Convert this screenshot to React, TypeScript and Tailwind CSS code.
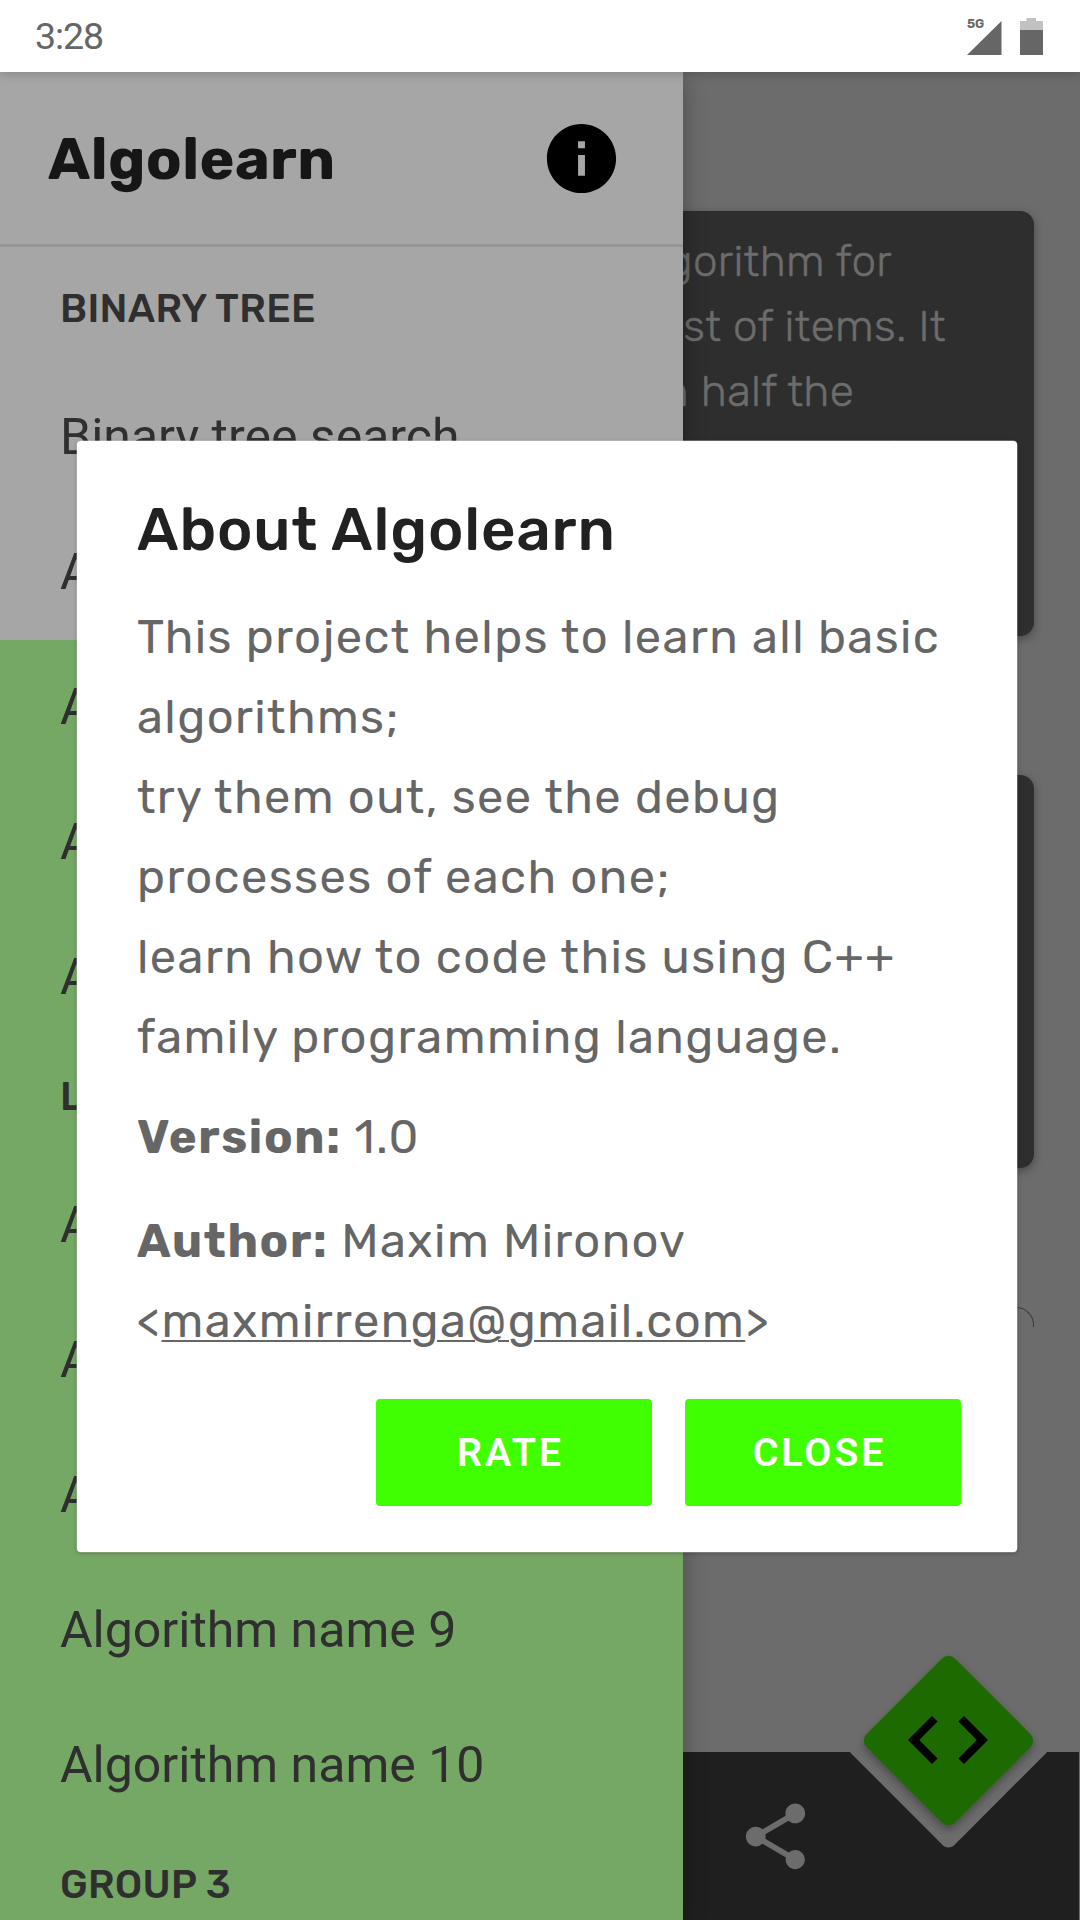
import type { ReactNode } from "react";

const firstGroup = ["Binary tree search", "Algorithm name 2"];
const secondHalf = ["Algorithm name 3", "Algorithm name 4", "Algorithm name 5"];
const listGroup = [
  "Algorithm name 6",
  "Algorithm name 7",
  "Algorithm name 8",
  "Algorithm name 9",
  "Algorithm name 10",
];

function StatusBar() {
  return (
    <header className="relative z-30 flex h-[72px] shrink-0 items-center justify-between bg-white pr-[37px] pl-[35px] text-[#666666] shadow-[0_2px_10px_rgba(0,0,0,0.2)]">
      <span className="font-['Roboto',sans-serif] text-[37.5px] leading-[42px] tracking-[-1.1px]">3:28</span>
      <div className="flex h-[37px] items-end gap-[18px]">
        <div className="relative h-[34px] w-[35px]">
          <span className="absolute top-[-5px] left-0 font-['Rubik','Roboto',sans-serif] text-[13px] leading-[16px] font-semibold tracking-[-0.3px]">
            5G
          </span>
          <svg viewBox="0 0 35 34" className="h-[34px] w-[35px]" fill="currentColor">
            <path d="M0 34 34.5 0v34z" />
          </svg>
        </div>
        <svg viewBox="0 0 23 37" className="h-[37px] w-[23px]">
          <path d="M6.5 0h9.5v3H23v9H0V3h6.5z" fill="#c1c1c1" />
          <path d="M0 12h23v25H0z" fill="#666666" />
        </svg>
      </div>
    </header>
  );
}

function GroupTitle({ children }: { children: ReactNode }) {
  return (
    <h2 className="h-[113px] pl-[60px] font-['Rubik','Roboto',sans-serif] text-[39.5px] leading-[103px] font-medium tracking-[0.3px]">
      {children}
    </h2>
  );
}

function Item({ children }: { children: ReactNode }) {
  return (
    <div className="h-[135px] pl-[60px] font-['Roboto',sans-serif] text-[50px] leading-[134px]">{children}</div>
  );
}

function Drawer() {
  return (
    <nav className="absolute inset-y-0 left-0 z-10 flex w-[683px] flex-col overflow-hidden bg-[#a6a6a6] text-[#2f2f2f]">
      <div className="flex h-[175px] shrink-0 items-center justify-between border-b-[3px] border-[#959595] pt-[2px] pr-[60px] pl-[48px]">
        <h1 className="font-['Rubik','Roboto',sans-serif] text-[59px] leading-[80px] font-bold tracking-[0.4px] text-[#161616]">
          Algolearn
        </h1>
        <svg viewBox="0 0 24 24" className="mb-[1px] size-[83px]" fill="#000">
          <path d="M12 2C6.48 2 2 6.48 2 12s4.48 10 10 10 10-4.48 10-10S17.52 2 12 2zm1 15h-2v-6h2v6zm0-8h-2V7h2v2z" />
        </svg>
      </div>
      <div className="shrink-0 pt-[10px]">
        <GroupTitle>BINARY TREE</GroupTitle>
        {firstGroup.map((name) => (
          <Item key={name}>{name}</Item>
        ))}
      </div>
      <div className="h-[1280px] shrink-0 bg-[#75a765]">
        {secondHalf.map((name) => (
          <Item key={name}>{name}</Item>
        ))}
        <GroupTitle>LIST</GroupTitle>
        {listGroup.map((name) => (
          <Item key={name}>{name}</Item>
        ))}
        <GroupTitle>GROUP 3</GroupTitle>
      </div>
    </nav>
  );
}

function Page() {
  return (
    <main className="relative flex h-full flex-col bg-[#6c6c6c]">
      <div className="flex flex-col gap-[139px] pt-[139px] pr-[46px] pl-[46px]">
        <section className="h-[425px] rounded-[14px] bg-[#2e2e2e] pt-[18px] text-right font-['Rubik','Roboto',sans-serif] text-[44px] leading-[65px] font-light tracking-[0.33px] whitespace-nowrap text-[#6c6c6c] shadow-[0_3px_10px_rgba(0,0,0,0.35)] [-webkit-text-stroke:0.5px_#6c6c6c]">
          <p className="pr-[142px]">Binary search is an efficient algorithm for</p>
          <p className="pr-[88px]">finding an item from a list of items. It</p>
          <p className="pr-[180px]">works by dividing in half the</p>
          <p className="pr-[134px]">portion of the list that could</p>
        </section>
        <section className="h-[393px] rounded-[14px] bg-[#2e2e2e] shadow-[0_3px_10px_rgba(0,0,0,0.35)]" />
        <section className="h-[20px] rounded-tr-[18px] border-t border-r border-[#3a3a3a]" />
      </div>
      <div className="relative mt-auto mr-px h-[168px] overflow-hidden bg-[#1f1f1f]">
        <div className="absolute top-[-69.5px] left-[878.8px] size-[139px] rotate-45 rounded-br-[8px] bg-[#6c6c6c]" />
        <svg viewBox="0 0 24 24" className="absolute top-[44.5px] left-[735.7px] size-[79px]" fill="#6c6c6c">
          <path d="M18 16.08c-.76 0-1.44.3-1.96.77L8.91 12.7c.05-.23.09-.46.09-.7s-.04-.47-.09-.7l7.05-4.11c.54.5 1.25.81 2.04.81 1.66 0 3-1.34 3-3s-1.34-3-3-3-3 1.34-3 3c0 .24.04.47.09.7L8.04 9.81C7.5 9.31 6.79 9 6 9c-1.66 0-3 1.34-3 3s1.34 3 3 3c.79 0 1.5-.31 2.04-.81l7.12 4.16c-.05.21-.08.43-.08.65 0 1.61 1.31 2.92 2.92 2.92s2.92-1.31 2.92-2.92-1.31-2.92-2.92-2.92z" />
        </svg>
      </div>
      <div className="absolute right-[47px] bottom-[95px] flex size-[170px] items-center justify-center">
        <div className="absolute size-[125px] rotate-45 rounded-[9px] bg-[#1d6b00] shadow-[3px_3px_8px_rgba(0,0,0,0.32)]" />
        <svg viewBox="0 0 24 24" className="relative size-[96px]" fill="#000">
          <path d="M9.4 16.6 4.8 12l4.6-4.6L8 6l-6 6 6 6 1.4-1.4zm5.2 0 4.6-4.6-4.6-4.6L16 6l6 6-6 6-1.4-1.4z" />
        </svg>
      </div>
    </main>
  );
}

function DialogButton({ children }: { children: ReactNode }) {
  return (
    <button className="h-[107px] w-[276px] rounded-[4px] bg-[#40ff00] pr-[7px] text-center font-['Roboto',sans-serif] text-[39.4px] leading-[107px] font-semibold tracking-[2.9px] text-white">
      {children}
    </button>
  );
}

function AboutDialog() {
  return (
    <div
      role="dialog"
      className="absolute top-[369px] left-[77px] z-20 h-[1111px] w-[940px] rounded-[4px] bg-white pt-[49px] pr-[56px] pl-[60px] shadow-[0_1px_4px_rgba(0,0,0,0.3),0_0_0_0.5px_rgba(255,255,255,0.6)]"
    >
      <h2 className="font-['Rubik','Roboto',sans-serif] text-[60px] leading-[80px] font-medium tracking-[0.83px] text-[#212121]">
        About Algolearn
      </h2>
      <div className="mt-[27px] font-['Rubik','Roboto',sans-serif] text-[47px] leading-[80px] font-normal tracking-[1.41px] whitespace-nowrap text-[#666666]">
        <p>This project helps to learn all basic</p>
        <p>algorithms;</p>
        <p>try them out, see the debug</p>
        <p>processes of each one;</p>
        <p>learn how to code this using C++</p>
        <p>family programming language.</p>
        <p className="mt-[20px]">
          <b className="font-bold tracking-[1.65px]">Version:</b> 1.0
        </p>
        <p className="mt-[24px]">
          <b className="font-bold tracking-[1.65px]">Author:</b> Maxim Mironov
        </p>
        <p>
          &lt;<a className="underline decoration-[2px] underline-offset-[3px]">maxmirrenga@gmail.com</a>&gt;
        </p>
      </div>
      <div className="mt-[38px] flex justify-end gap-[33px]">
        <DialogButton>RATE</DialogButton>
        <DialogButton>CLOSE</DialogButton>
      </div>
    </div>
  );
}

export default function App() {
  return (
    <div className="flex h-[1920px] w-[1080px] flex-col overflow-hidden bg-[#6c6c6c]">
      <StatusBar />
      <div className="relative min-h-0 flex-1">
        <Page />
        <div className="absolute inset-y-0 left-0 w-[683px] shadow-[0_8px_22px_rgba(0,0,0,0.3)]" />
        <Drawer />
        <AboutDialog />
      </div>
    </div>
  );
}
